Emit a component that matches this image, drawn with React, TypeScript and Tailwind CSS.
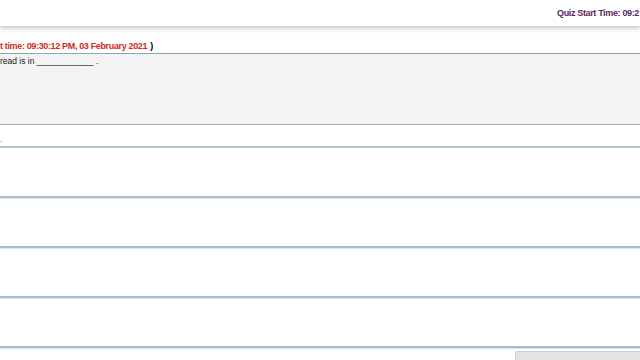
import React from 'react';

const rows = [0, 1, 2, 3];

export default function App() {
  return (
    <div className="w-[640px] h-[360px] overflow-hidden bg-white font-['Liberation_Sans',Arial,sans-serif] relative">
      {/* top bar */}
      <div className="h-[27px] bg-white border-b border-[#d4d4d4] shadow-[0_2px_4px_rgba(0,0,0,0.18)] flex items-end justify-end">
        <span className="text-[9px] leading-none text-[#5a1f5e] font-semibold pb-[8px] pr-[1px] whitespace-nowrap tracking-[-0.35px]">
          Quiz Start Time: 09:2
        </span>
      </div>

      <div className="h-[13px]" />

      {/* current time */}
      <div className="h-[13px] flex items-center text-[9px] leading-none font-bold whitespace-nowrap tracking-[-0.35px]">
        <span className="text-[#d42a1c]">t time: 09:30:12 PM, 03 February 2021</span>
        <span className="text-black ml-[3px]">)</span>
      </div>

      {/* question panel */}
      <div className="border-t border-[#86aab2] border-b border-b-[#a3abae] bg-[#f3f3f3] h-[72px] pt-[3px]">
        <p className="text-[8.5px] leading-none text-[#222] whitespace-nowrap">
          read is in ____________ .
        </p>
      </div>

      {/* answer header row */}
      <div className="h-[23px] border-b-2 border-[#b3c3cc] flex items-end pb-[2px]">
        <span className="text-[8px] leading-none text-[#333]">.</span>
      </div>

      {/* option rows */}
      <div className="flex flex-col">
        {rows.map((r) => (
          <div key={r} className="h-[50px] border-b-2 border-[#a9bccb] shadow-[0_1px_0_#d8e4ec]" />
        ))}
      </div>

      {/* next button peeking */}
      <div className="absolute left-[515px] top-[351px] w-[130px] h-[20px] bg-[#e4e4e2] border border-[#cfcfcf] rounded-[2px]" />
    </div>
  );
}
